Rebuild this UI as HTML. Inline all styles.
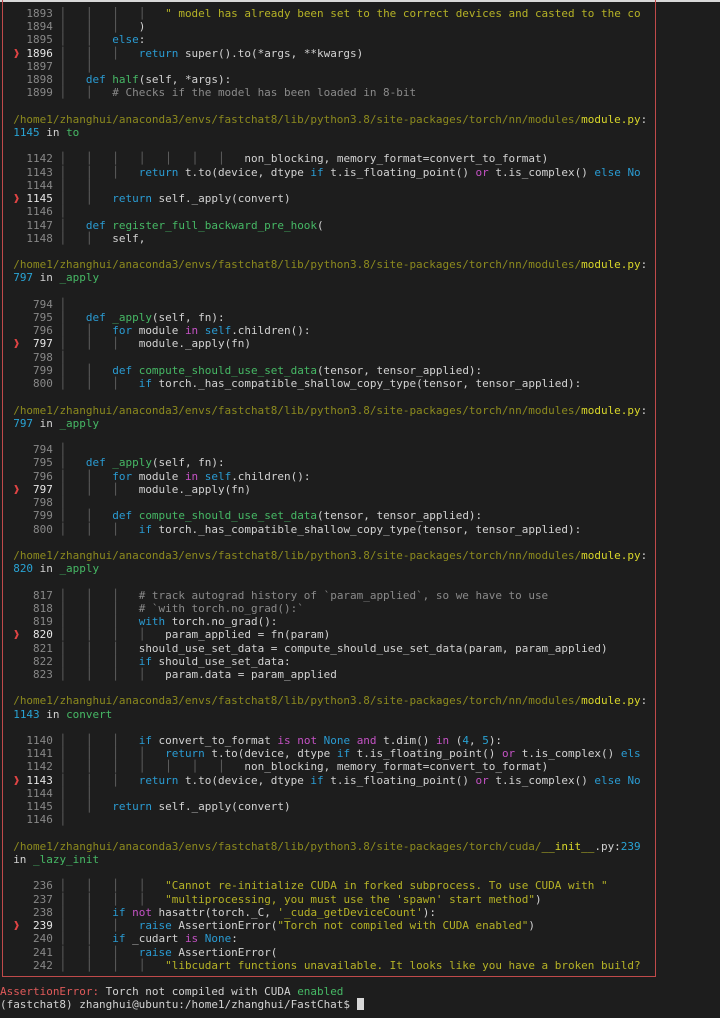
<!DOCTYPE html>
<html><head><meta charset="utf-8">
<style>
html,body{margin:0;padding:0;background:#1d1d1d;width:720px;height:1018px;overflow:hidden}
#top{position:absolute;left:0;top:0;width:720px;height:2px;background:#d8d8d8}
#box{position:absolute;left:2px;top:-20px;width:654px;height:997px;border:1.5px solid #c04a4a;border-top:none;box-sizing:border-box}
#t{position:absolute;left:0;top:7px;width:656px;overflow:hidden;font-family:"DejaVu Sans Mono","Liberation Mono",monospace;font-size:10.98px;color:#d2d2d2}
#t div{height:13.22px;line-height:13.22px;white-space:pre}
i{font-style:normal;color:#666}
.n{color:#888}.c{color:#e6e6e6}.a{color:#e04444;display:inline-block;width:1ch}
.k{color:#2a9bd2}.o{color:#c452c4}.f{color:#46b865}.s{color:#b5b226}.m{color:#8a8a8a}
.p{color:#8c8a1e}.y{color:#d8d62a}.u{color:#29a3d4}.r{color:#e05a5a}
.cur{display:inline-block;width:7px;height:12px;background:#d8d8d8;vertical-align:-2px}
</style></head><body>
<div id="top"></div>
<div id="box"></div>
<div id="t">
<div>    <span class="n">1893</span> <i>│</i>   <i>│</i>   <i>│</i>   <i>│</i>   <span class="s">" model has already been set to the correct devices and casted to the co</span></div>
<div>    <span class="n">1894</span> <i>│</i>   <i>│</i>   <i>│</i>   )</div>
<div>    <span class="n">1895</span> <i>│</i>   <i>│</i>   <span class="k">else</span>:</div>
<div>  <span class="a">❱</span> <span class="c">1896</span> <i>│</i>   <i>│</i>   <i>│</i>   <span class="k">return</span> super().to(*args, **kwargs)</div>
<div>    <span class="n">1897</span> <i>│</i>   <i>│</i></div>
<div>    <span class="n">1898</span> <i>│</i>   <span class="k">def</span> <span class="f">half</span>(self, *args):</div>
<div>    <span class="n">1899</span> <i>│</i>   <i>│</i>   <span class="m"># Checks if the model has been loaded in 8-bit</span></div>
<div> </div>
<div>  <span class="p">/home1/zhanghui/anaconda3/envs/fastchat8/lib/python3.8/site-packages/torch/nn/modules/</span><span class="y">module.py</span>:</div>
<div>  <span class="u">1145</span> in <span class="f">to</span></div>
<div> </div>
<div>    <span class="n">1142</span> <i>│</i>   <i>│</i>   <i>│</i>   <i>│</i>   <i>│</i>   <i>│</i>   <i>│</i>   non_blocking, memory_format=convert_to_format)</div>
<div>    <span class="n">1143</span> <i>│</i>   <i>│</i>   <i>│</i>   <span class="k">return</span> t.to(device, dtype <span class="k">if</span> t.is_floating_point() <span class="o">or</span> t.is_complex() <span class="k">else No</span></div>
<div>    <span class="n">1144</span> <i>│</i>   <i>│</i></div>
<div>  <span class="a">❱</span> <span class="c">1145</span> <i>│</i>   <i>│</i>   <span class="k">return</span> self._apply(convert)</div>
<div>    <span class="n">1146</span> <i>│</i></div>
<div>    <span class="n">1147</span> <i>│</i>   <span class="k">def</span> <span class="f">register_full_backward_pre_hook</span>(</div>
<div>    <span class="n">1148</span> <i>│</i>   <i>│</i>   self,</div>
<div> </div>
<div>  <span class="p">/home1/zhanghui/anaconda3/envs/fastchat8/lib/python3.8/site-packages/torch/nn/modules/</span><span class="y">module.py</span>:</div>
<div>  <span class="u">797</span> in <span class="f">_apply</span></div>
<div> </div>
<div>     <span class="n">794</span> <i>│</i></div>
<div>     <span class="n">795</span> <i>│</i>   <span class="k">def</span> <span class="f">_apply</span>(self, fn):</div>
<div>     <span class="n">796</span> <i>│</i>   <i>│</i>   <span class="k">for</span> module <span class="o">in</span> <span class="k">self</span>.children():</div>
<div>  <span class="a">❱</span>  <span class="c">797</span> <i>│</i>   <i>│</i>   <i>│</i>   module._apply(fn)</div>
<div>     <span class="n">798</span> <i>│</i></div>
<div>     <span class="n">799</span> <i>│</i>   <i>│</i>   <span class="k">def</span> <span class="f">compute_should_use_set_data</span>(tensor, tensor_applied):</div>
<div>     <span class="n">800</span> <i>│</i>   <i>│</i>   <i>│</i>   <span class="k">if</span> torch._has_compatible_shallow_copy_type(tensor, tensor_applied):</div>
<div> </div>
<div>  <span class="p">/home1/zhanghui/anaconda3/envs/fastchat8/lib/python3.8/site-packages/torch/nn/modules/</span><span class="y">module.py</span>:</div>
<div>  <span class="u">797</span> in <span class="f">_apply</span></div>
<div> </div>
<div>     <span class="n">794</span> <i>│</i></div>
<div>     <span class="n">795</span> <i>│</i>   <span class="k">def</span> <span class="f">_apply</span>(self, fn):</div>
<div>     <span class="n">796</span> <i>│</i>   <i>│</i>   <span class="k">for</span> module <span class="o">in</span> <span class="k">self</span>.children():</div>
<div>  <span class="a">❱</span>  <span class="c">797</span> <i>│</i>   <i>│</i>   <i>│</i>   module._apply(fn)</div>
<div>     <span class="n">798</span> <i>│</i></div>
<div>     <span class="n">799</span> <i>│</i>   <i>│</i>   <span class="k">def</span> <span class="f">compute_should_use_set_data</span>(tensor, tensor_applied):</div>
<div>     <span class="n">800</span> <i>│</i>   <i>│</i>   <i>│</i>   <span class="k">if</span> torch._has_compatible_shallow_copy_type(tensor, tensor_applied):</div>
<div> </div>
<div>  <span class="p">/home1/zhanghui/anaconda3/envs/fastchat8/lib/python3.8/site-packages/torch/nn/modules/</span><span class="y">module.py</span>:</div>
<div>  <span class="u">820</span> in <span class="f">_apply</span></div>
<div> </div>
<div>     <span class="n">817</span> <i>│</i>   <i>│</i>   <i>│</i>   <span class="m"># track autograd history of `param_applied`, so we have to use</span></div>
<div>     <span class="n">818</span> <i>│</i>   <i>│</i>   <i>│</i>   <span class="m"># `with torch.no_grad():`</span></div>
<div>     <span class="n">819</span> <i>│</i>   <i>│</i>   <i>│</i>   <span class="k">with</span> torch.no_grad():</div>
<div>  <span class="a">❱</span>  <span class="c">820</span> <i>│</i>   <i>│</i>   <i>│</i>   <i>│</i>   param_applied = fn(param)</div>
<div>     <span class="n">821</span> <i>│</i>   <i>│</i>   <i>│</i>   should_use_set_data = compute_should_use_set_data(param, param_applied)</div>
<div>     <span class="n">822</span> <i>│</i>   <i>│</i>   <i>│</i>   <span class="k">if</span> should_use_set_data:</div>
<div>     <span class="n">823</span> <i>│</i>   <i>│</i>   <i>│</i>   <i>│</i>   param.data = param_applied</div>
<div> </div>
<div>  <span class="p">/home1/zhanghui/anaconda3/envs/fastchat8/lib/python3.8/site-packages/torch/nn/modules/</span><span class="y">module.py</span>:</div>
<div>  <span class="u">1143</span> in <span class="f">convert</span></div>
<div> </div>
<div>    <span class="n">1140</span> <i>│</i>   <i>│</i>   <i>│</i>   <span class="k">if</span> convert_to_format <span class="o">is not</span> <span class="k">None</span> <span class="o">and</span> t.dim() <span class="o">in</span> (<span class="u">4</span>, <span class="u">5</span>):</div>
<div>    <span class="n">1141</span> <i>│</i>   <i>│</i>   <i>│</i>   <i>│</i>   <span class="k">return</span> t.to(device, dtype <span class="k">if</span> t.is_floating_point() <span class="o">or</span> t.is_complex() <span class="k">els</span></div>
<div>    <span class="n">1142</span> <i>│</i>   <i>│</i>   <i>│</i>   <i>│</i>   <i>│</i>   <i>│</i>   <i>│</i>   non_blocking, memory_format=convert_to_format)</div>
<div>  <span class="a">❱</span> <span class="c">1143</span> <i>│</i>   <i>│</i>   <i>│</i>   <span class="k">return</span> t.to(device, dtype <span class="k">if</span> t.is_floating_point() <span class="o">or</span> t.is_complex() <span class="k">else No</span></div>
<div>    <span class="n">1144</span> <i>│</i>   <i>│</i></div>
<div>    <span class="n">1145</span> <i>│</i>   <i>│</i>   <span class="k">return</span> self._apply(convert)</div>
<div>    <span class="n">1146</span> <i>│</i></div>
<div> </div>
<div>  <span class="p">/home1/zhanghui/anaconda3/envs/fastchat8/lib/python3.8/site-packages/torch/cuda/</span><span class="y">__init__</span>.py:<span class="u">239</span></div>
<div>  in <span class="f">_lazy_init</span></div>
<div> </div>
<div>     <span class="n">236</span> <i>│</i>   <i>│</i>   <i>│</i>   <i>│</i>   <span class="s">"Cannot re-initialize CUDA in forked subprocess. To use CUDA with "</span></div>
<div>     <span class="n">237</span> <i>│</i>   <i>│</i>   <i>│</i>   <i>│</i>   <span class="s">"multiprocessing, you must use the 'spawn' start method"</span>)</div>
<div>     <span class="n">238</span> <i>│</i>   <i>│</i>   <span class="k">if</span> <span class="o">not</span> hasattr(torch._C, <span class="s">'_cuda_getDeviceCount'</span>):</div>
<div>  <span class="a">❱</span>  <span class="c">239</span> <i>│</i>   <i>│</i>   <i>│</i>   <span class="k">raise</span> AssertionError(<span class="s">"Torch not compiled with CUDA enabled"</span>)</div>
<div>     <span class="n">240</span> <i>│</i>   <i>│</i>   <span class="k">if</span> _cudart <span class="o">is</span> <span class="k">None</span>:</div>
<div>     <span class="n">241</span> <i>│</i>   <i>│</i>   <i>│</i>   <span class="k">raise</span> AssertionError(</div>
<div>     <span class="n">242</span> <i>│</i>   <i>│</i>   <i>│</i>   <i>│</i>   <span class="s">"libcudart functions unavailable. It looks like you have a broken build?</span></div>
<div> </div>
<div><span class="r">AssertionError:</span> Torch not compiled with CUDA <span class="f">enabled</span></div>
<div>(fastchat8) zhanghui@ubuntu:/home1/zhanghui/FastChat$ <span class="cur"></span></div>
</div>
</body></html>
